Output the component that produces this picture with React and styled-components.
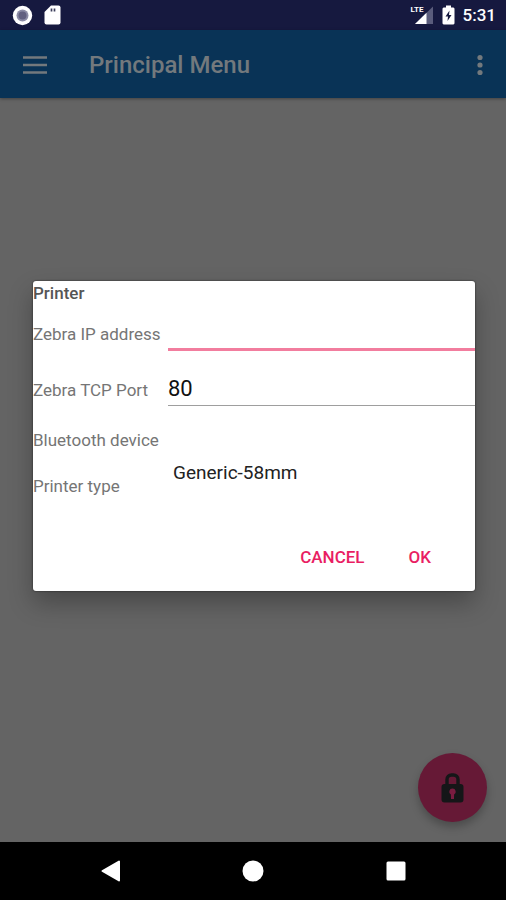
import React from "react";
import styled, { createGlobalStyle } from "styled-components";

const GlobalStyle = createGlobalStyle`
  * { box-sizing: border-box; }
  body {
    margin: 0;
    background: #646464;
    font-family: Roboto, "Liberation Sans", sans-serif;
  }
  button, input, select { font: inherit; }
`;

const Screen = styled.div`
  display: flex;
  flex-direction: column;
  min-height: 100vh;
`;

const StatusBar = styled.div`
  display: flex;
  align-items: center;
  justify-content: space-between;
  height: 30px;
  padding: 0 10px 0 12px;
  background: #16193f;
  color: #fff;
`;

const StatusGroup = styled.div`
  display: flex;
  align-items: center;
  gap: ${(p) => p.$gap}px;
`;

const Signal = styled.span`
  display: flex;
  position: relative;
  width: 23px;
  height: 20px;
`;

const NetworkLabel = styled.span`
  position: absolute;
  left: 0;
  top: 0;
  font-size: 8px;
  line-height: 10px;
  font-weight: 700;
`;

const Clock = styled.time`
  font-size: 17px;
  line-height: 24px;
  font-weight: 500;
`;

const Stage = styled.div`
  display: flex;
  flex: 1;
  flex-direction: column;
  position: relative;
`;

const AppBar = styled.header`
  display: flex;
  align-items: center;
  height: 68px;
  padding: 2px 16px 0 15px;
  background: #093356;
  color: #73797d;
  box-shadow: 0 1px 3px rgba(0, 0, 0, 0.35);
`;

const AppTitle = styled.h1`
  flex: 1;
  margin: 0 0 0 34px;
  font-size: 24px;
  line-height: 32px;
  font-weight: 500;
`;

const IconButton = styled.button`
  display: flex;
  align-items: center;
  justify-content: center;
  width: ${(p) => p.$width}px;
  height: 40px;
  padding: 0;
  border: 0;
  background: transparent;
  color: inherit;
`;

const Fab = styled.button`
  display: flex;
  align-items: center;
  justify-content: center;
  position: absolute;
  right: 19px;
  bottom: 20px;
  width: 69px;
  height: 69px;
  padding: 0;
  border: 0;
  border-radius: 50%;
  background: #661936;
  color: #151618;
  box-shadow: 0 5px 8px rgba(0, 0, 0, 0.25);
`;

const Overlay = styled.div`
  display: flex;
  align-items: center;
  position: absolute;
  inset: 0;
  padding: 0 31px 0 33px;
`;

const Dialog = styled.form`
  width: 100%;
  padding-bottom: 10px;
  border-radius: 3px;
  background: #fff;
  box-shadow: 0 0 2px rgba(0, 0, 0, 0.7), 0 12px 24px rgba(0, 0, 0, 0.28);
`;

const DialogTitle = styled.h2`
  margin: 0;
  color: #555;
  font-size: 17px;
  line-height: 25px;
  font-weight: 500;
`;

const Row = styled.div`
  display: grid;
  grid-template-columns: 135px 1fr;
  height: ${(p) => p.$height}px;
`;

const Label = styled.label`
  align-self: center;
  color: #757575;
  font-size: 17px;
  line-height: 24px;
  white-space: nowrap;
`;

const TextField = styled.input`
  width: 100%;
  height: ${(p) => (p.$active ? 45 : 44)}px;
  padding: 9px 0 0;
  border: 0;
  border-bottom: ${(p) => (p.$active ? "3px solid #f27d9e" : "1px solid #9e9e9e")};
  border-radius: 0;
  outline: 0;
  background: transparent;
  color: #111;
  font-size: 22px;
`;

const SelectField = styled.select`
  width: 100%;
  height: 22px;
  padding: 0 5px;
  border: 0;
  outline: 0;
  appearance: none;
  background: transparent;
  color: #222;
  font-size: 19px;
  line-height: 22px;
`;

const Actions = styled.div`
  display: flex;
  justify-content: flex-end;
  gap: 20px;
  margin-top: 23px;
  padding-right: 32px;
`;

const TextButton = styled.button`
  height: 48px;
  padding: 0 12px;
  border: 0;
  background: transparent;
  color: #e91e63;
  font-size: 17px;
  font-weight: 500;
`;

const NavBar = styled.nav`
  display: flex;
  align-items: center;
  justify-content: space-around;
  height: 58px;
  padding: 0 39px;
  background: #000;
  color: #fff;
`;

const RecordIcon = () => (
  <svg width="21" height="21" viewBox="0 0 21 21" aria-hidden="true">
    <circle cx="10.5" cy="10.5" r="9.7" fill="#fff" />
    <circle cx="10.5" cy="10.5" r="6" fill="#8c8ca6" />
    <circle cx="10.5" cy="10.5" r="4" fill="#626080" />
  </svg>
);

const CardIcon = () => (
  <svg width="17" height="20" viewBox="0 0 17 20" aria-hidden="true">
    <path d="M7 .5h7.500A2 2 0 0 1 16.500 2.500v15a2 2 0 0 1-2 2H2.500a2 2 0 0 1-2-2V7z" fill="#fff" />
    <path d="M7.500 3.500v3M10.500 3.500v3" stroke="#3b3d5b" strokeWidth="1.700" />
  </svg>
);

const SignalIcon = () => (
  <svg width="23" height="20" viewBox="0 0 23 20" aria-hidden="true">
    <path d="M4 19 22 1.500V19z" fill="#5a5c7c" />
    <path d="M4 19 15.500 7.800V19z" fill="#fff" />
  </svg>
);

const BatteryIcon = () => (
  <svg width="13" height="20" viewBox="0 0 13 20" aria-hidden="true">
    <path d="M4 .5h5V2.500h2.500l1 1v15l-1 1h-10l-1-1v-15l1-1H4z" fill="#fff" />
    <path d="M7.500 5.500 3.500 11.500H6L5.500 16 9.500 10H7z" fill="#16193f" />
  </svg>
);

const MenuIcon = () => (
  <svg width="24" height="18" viewBox="0 0 24 18" aria-hidden="true">
    <path d="M0 1.500h24M0 9h24M0 16.500h24" stroke="currentColor" strokeWidth="2.600" />
  </svg>
);

const MoreIcon = () => (
  <svg width="6" height="22" viewBox="0 0 6 22" aria-hidden="true">
    <circle cx="3" cy="3.500" r="2.600" fill="currentColor" />
    <circle cx="3" cy="11" r="2.600" fill="currentColor" />
    <circle cx="3" cy="18.500" r="2.600" fill="currentColor" />
  </svg>
);

const LockIcon = () => (
  <svg width="24" height="32" viewBox="0 0 24 32" aria-hidden="true">
    <path d="M6 15V7.500a4.500 4.500 0 0 1 4.500-4.500h2a4.500 4.500 0 0 1 4.500 4.500V15" fill="none" stroke="currentColor" strokeWidth="3.400" />
    <rect x="0.500" y="12" width="22" height="18.500" rx="3" fill="currentColor" />
    <path d="M11.500 16.500a3.200 3.200 0 0 1 1.600 6L13 27h-3l-.1-4.500a3.200 3.200 0 0 1 1.600-6z" fill="#7a1c40" />
  </svg>
);

const BackIcon = () => (
  <svg width="20" height="22" viewBox="0 0 20 22" aria-hidden="true">
    <path d="M2.500 11 19 1.500v19z" fill="currentColor" stroke="currentColor" strokeWidth="2" strokeLinejoin="round" />
  </svg>
);

const HomeIcon = () => (
  <svg width="22" height="22" viewBox="0 0 22 22" aria-hidden="true">
    <circle cx="11" cy="11" r="10.500" fill="currentColor" />
  </svg>
);

const RecentsIcon = () => (
  <svg width="20" height="20" viewBox="0 0 20 20" aria-hidden="true">
    <rect x="0.500" y="0.500" width="19" height="19" rx="1.500" fill="currentColor" />
  </svg>
);

export default function App() {
  return (
    <>
      <GlobalStyle />
      <Screen>
        <StatusBar>
          <StatusGroup $gap={11}>
            <RecordIcon />
            <CardIcon />
          </StatusGroup>
          <StatusGroup $gap={8}>
            <Signal>
              <SignalIcon />
              <NetworkLabel>LTE</NetworkLabel>
            </Signal>
            <BatteryIcon />
            <Clock>5:31</Clock>
          </StatusGroup>
        </StatusBar>

        <Stage>
          <AppBar>
            <IconButton type="button" $width={40} aria-label="Open menu">
              <MenuIcon />
            </IconButton>
            <AppTitle>Principal Menu</AppTitle>
            <IconButton type="button" $width={20} aria-label="More options">
              <MoreIcon />
            </IconButton>
          </AppBar>
          <Fab type="button" aria-label="Lock">
            <LockIcon />
          </Fab>

          <Overlay>
            <Dialog
              role="dialog"
              aria-labelledby="dialog-title"
              onSubmit={(e) => e.preventDefault()}
            >
              <DialogTitle id="dialog-title">Printer</DialogTitle>
              <Row $height={56}>
                <Label htmlFor="ip">Zebra IP address</Label>
                <TextField id="ip" type="text" $active />
              </Row>
              <Row $height={56}>
                <Label htmlFor="port">Zebra TCP Port</Label>
                <TextField id="port" type="text" inputMode="numeric" defaultValue="80" />
              </Row>
              <Row $height={44}>
                <Label htmlFor="device">Bluetooth device</Label>
                <SelectField id="device" />
              </Row>
              <Row $height={48}>
                <Label htmlFor="type">Printer type</Label>
                <SelectField id="type" defaultValue="Generic-58mm">
                  <option>Generic-58mm</option>
                </SelectField>
              </Row>
              <Actions>
                <TextButton type="button">CANCEL</TextButton>
                <TextButton type="submit">OK</TextButton>
              </Actions>
            </Dialog>
          </Overlay>
        </Stage>

        <NavBar>
          <IconButton type="button" $width={40} aria-label="Back">
            <BackIcon />
          </IconButton>
          <IconButton type="button" $width={40} aria-label="Home">
            <HomeIcon />
          </IconButton>
          <IconButton type="button" $width={40} aria-label="Recent apps">
            <RecentsIcon />
          </IconButton>
        </NavBar>
      </Screen>
    </>
  );
}
